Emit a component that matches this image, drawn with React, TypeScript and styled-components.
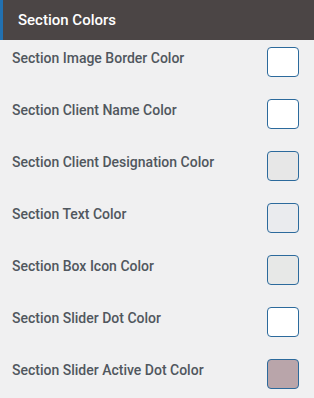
import styled, { createGlobalStyle } from "styled-components";

const GlobalStyle = createGlobalStyle`
  html, body {
    margin: 0;
    padding: 0;
    background: #f0f0f1;
  }
  body {
    font-family: Roboto, "Liberation Sans", sans-serif;
  }
`;

type ColorSetting = {
  label: string;
  value: string;
};

const settings: ColorSetting[] = [
  { label: "Section Image Border Color", value: "#ffffff" },
  { label: "Section Client Name Color", value: "#ffffff" },
  { label: "Section Client Designation Color", value: "#e7e7e7" },
  { label: "Section Text Color", value: "#eaebee" },
  { label: "Section Box Icon Color", value: "#e7e8e7" },
  { label: "Section Slider Dot Color", value: "#ffffff" },
  { label: "Section Slider Active Dot Color", value: "#b9a5aa" },
];

export default function App() {
  return (
    <>
      <GlobalStyle />
      <Panel>
        <Header>Section Colors</Header>
        {settings.map((setting) => (
          <Row key={setting.label}>
            <Label>{setting.label}</Label>
            <Swatch swatch={setting.value} />
          </Row>
        ))}
      </Panel>
    </>
  );
}

const Panel = styled.div`
  width: 314px;
  height: 398px;
  overflow: hidden;
  background: #f0f0f1;
`;

const Header = styled.div`
  height: 40px;
  box-sizing: border-box;
  display: flex;
  align-items: center;
  padding-left: 15px;
  background: #4b4545;
  border-left: 3px solid #2271b1;
  color: #ffffff;
  font-size: 15px;
  font-weight: 500;
`;

const Row = styled.div`
  display: flex;
  align-items: flex-start;
  justify-content: space-between;
  padding: 7px 15px 15px 12px;
`;

const Label = styled.span`
  font-size: 14px;
  font-weight: 500;
  line-height: 23px;
  color: #50575e;
`;

const Swatch = styled.div<{ swatch: string }>`
  width: 32px;
  height: 30px;
  box-sizing: border-box;
  border: 1px solid #2c6a9c;
  border-radius: 4px;
  background: ${(props) => props.swatch};
`;
